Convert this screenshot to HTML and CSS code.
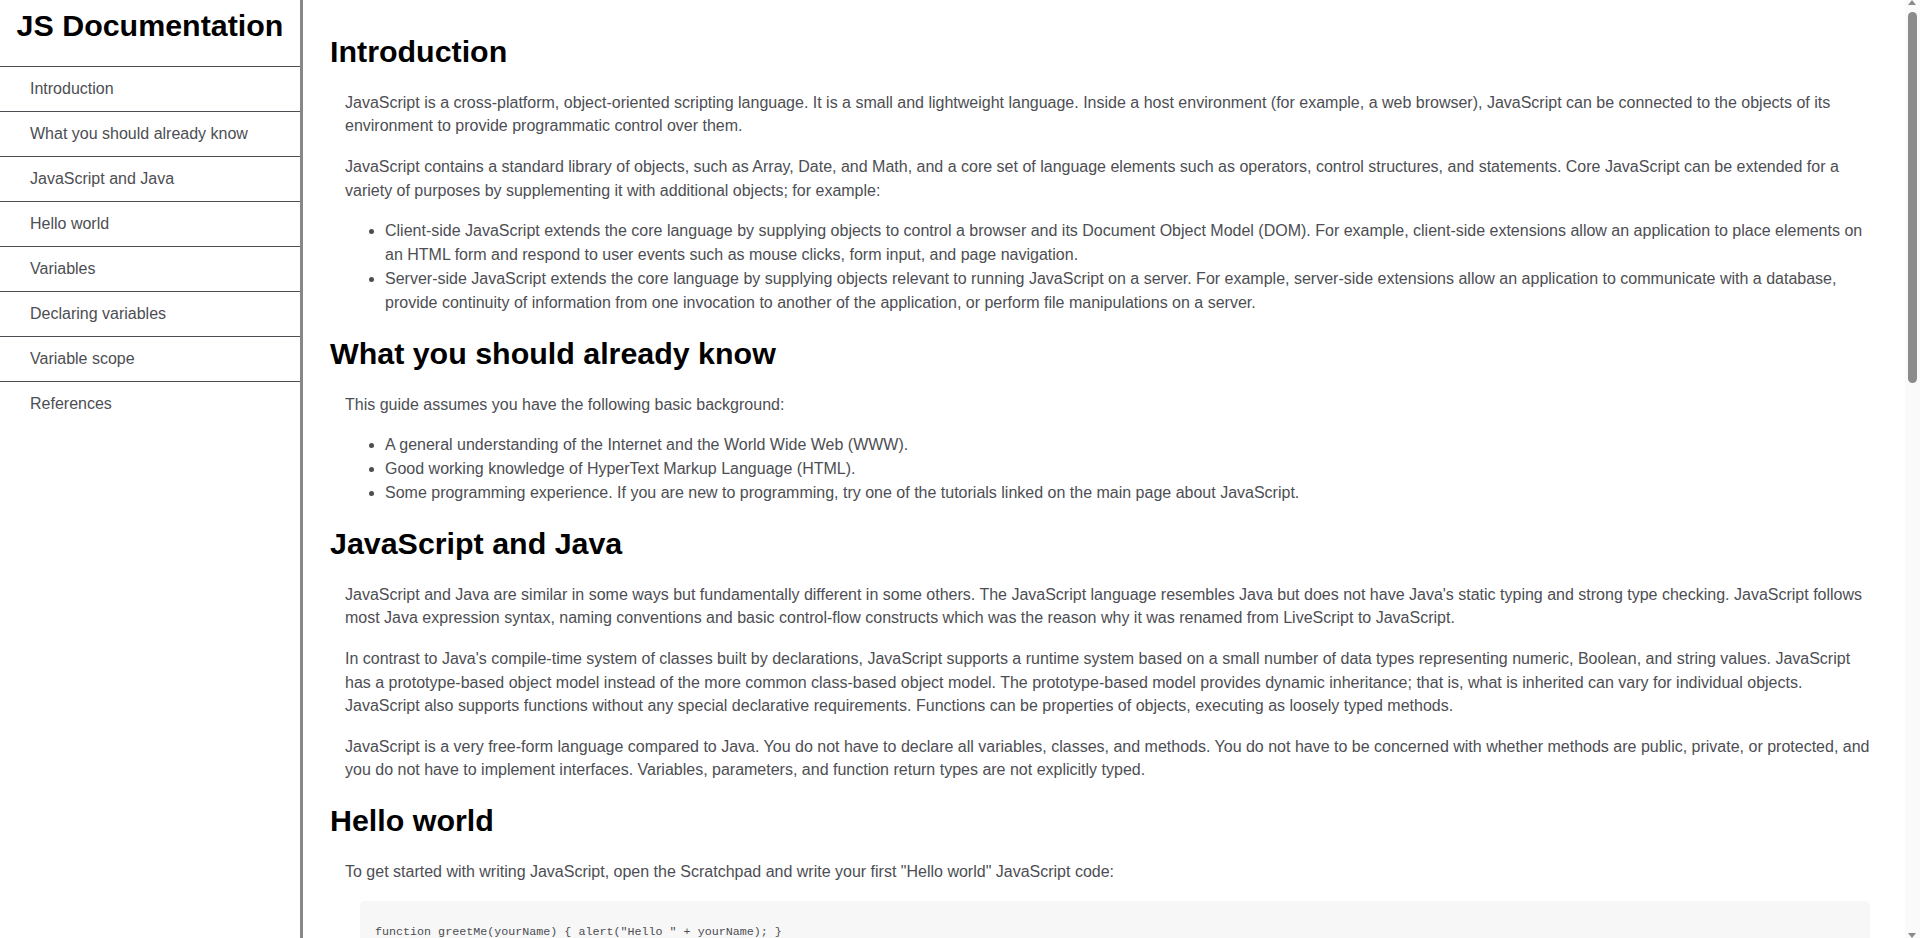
FILE: index.html
```html
<!DOCTYPE html>
<html lang="en">
<head>
<meta charset="utf-8">
<title>JS Documentation</title>
<link rel="stylesheet" href="styles.css">
</head>
<body>
<nav class="navbar" id="navbar">
  <header class="navbar-title">JS Documentation</header>
  <ul class="nav-list">
    <li class="nav-item"><a class="nav-link" href="#Introduction">Introduction</a></li>
    <li class="nav-item"><a class="nav-link" href="#What_you_should_already_know">What you should already know</a></li>
    <li class="nav-item"><a class="nav-link" href="#JavaScript_and_Java">JavaScript and Java</a></li>
    <li class="nav-item"><a class="nav-link" href="#Hello_world">Hello world</a></li>
    <li class="nav-item"><a class="nav-link" href="#Variables">Variables</a></li>
    <li class="nav-item"><a class="nav-link" href="#Declaring_variables">Declaring variables</a></li>
    <li class="nav-item"><a class="nav-link" href="#Variable_scope">Variable scope</a></li>
    <li class="nav-item"><a class="nav-link" href="#References">References</a></li>
  </ul>
</nav>
<main class="main-doc" id="main-doc">
  <section class="main-section" id="Introduction">
    <header class="section-title">Introduction</header>
    <article class="article">
      <p>JavaScript is a cross-platform, object-oriented scripting language. It is a small and lightweight language. Inside a host environment (for example, a web browser), JavaScript can be connected to the objects of its environment to provide programmatic control over them.</p>
      <p>JavaScript contains a standard library of objects, such as Array, Date, and Math, and a core set of language elements such as operators, control structures, and statements. Core JavaScript can be extended for a variety of purposes by supplementing it with additional objects; for example:</p>
      <ul class="bullets">
        <li>Client-side JavaScript extends the core language by supplying objects to control a browser and its Document Object Model (DOM). For example, client-side extensions allow an application to place elements on an HTML form and respond to user events such as mouse clicks, form input, and page navigation.</li>
        <li>Server-side JavaScript extends the core language by supplying objects relevant to running JavaScript on a server. For example, server-side extensions allow an application to communicate with a database, provide continuity of information from one invocation to another of the application, or perform file manipulations on a server.</li>
      </ul>
    </article>
  </section>
  <section class="main-section" id="What_you_should_already_know">
    <header class="section-title">What you should already know</header>
    <article class="article">
      <p>This guide assumes you have the following basic background:</p>
      <ul class="bullets">
        <li>A general understanding of the Internet and the World Wide Web (WWW).</li>
        <li>Good working knowledge of HyperText Markup Language (HTML).</li>
        <li>Some programming experience. If you are new to programming, try one of the tutorials linked on the main page about JavaScript.</li>
      </ul>
    </article>
  </section>
  <section class="main-section" id="JavaScript_and_Java">
    <header class="section-title">JavaScript and Java</header>
    <article class="article">
      <p>JavaScript and Java are similar in some ways but fundamentally different in some others. The JavaScript language resembles Java but does not have Java's static typing and strong type checking. JavaScript follows most Java expression syntax, naming conventions and basic control-flow constructs which was the reason why it was renamed from LiveScript to JavaScript.</p>
      <p>In contrast to Java's compile-time system of classes built by declarations, JavaScript supports a runtime system based on a small number of data types representing numeric, Boolean, and string values. JavaScript has a prototype-based object model instead of the more common class-based object model. The prototype-based model provides dynamic inheritance; that is, what is inherited can vary for individual objects. JavaScript also supports functions without any special declarative requirements. Functions can be properties of objects, executing as loosely typed methods.</p>
      <p>JavaScript is a very free-form language compared to Java. You do not have to declare all variables, classes, and methods. You do not have to be concerned with whether methods are public, private, or protected, and you do not have to implement interfaces. Variables, parameters, and function return types are not explicitly typed.</p>
    </article>
  </section>
  <section class="main-section" id="Hello_world">
    <header class="section-title">Hello world</header>
    <article class="article">
      <p>To get started with writing JavaScript, open the Scratchpad and write your first "Hello world" JavaScript code:</p>
      <code class="code-block">function greetMe(yourName) { alert("Hello " + yourName); }
greetMe("World");</code>
      <p>Select the code in the pad and hit Ctrl+R to watch it unfold in your browser!</p>
    </article>
  </section>
  <section class="main-section" id="Variables">
    <header class="section-title">Variables</header>
    <article class="article">
      <p>You use variables as symbolic names for values in your application. The names of variables, called identifiers, conform to certain rules.</p>
      <p>A JavaScript identifier must start with a letter, underscore (_), or dollar sign ($); subsequent characters can also be digits (0-9). Because JavaScript is case sensitive, letters include the characters "A" through "Z" (uppercase) and the characters "a" through "z" (lowercase).</p>
      <p>You can use ISO 8859-1 or Unicode letters such as å and ü in identifiers. You can also use the Unicode escape sequences as characters in identifiers. Some examples of legal names are Number_hits, temp99, and _name.</p>
    </article>
  </section>
  <section class="main-section" id="Declaring_variables">
    <header class="section-title">Declaring variables</header>
    <article class="article">
      <p>You can declare a variable in three ways:</p>
      <p>With the keyword var. For example,</p>
      <code class="code-block">var x = 42.</code>
      <p>This syntax can be used to declare both local and global variables.</p>
      <p>By simply assigning it a value. For example,</p>
      <code class="code-block">x = 42.</code>
      <p>This always declares a global variable. It generates a strict JavaScript warning. You shouldn't use this variant.</p>
      <p>With the keyword let. For example,</p>
      <code class="code-block">let y = 13.</code>
      <p>This syntax can be used to declare a block scope local variable. See Variable scope below.</p>
    </article>
  </section>
  <section class="main-section" id="Variable_scope">
    <header class="section-title">Variable scope</header>
    <article class="article">
      <p>When you declare a variable outside of any function, it is called a global variable, because it is available to any other code in the current document. When you declare a variable within a function, it is called a local variable, because it is available only within that function.</p>
      <p>JavaScript before ECMAScript 2015 does not have block statement scope; rather, a variable declared within a block is local to the function (or global scope) that the block resides within. For example the following code will log 5, because the scope of x is the function (or global context) within which x is declared, not the block, which in this case is an if statement.</p>
      <code class="code-block">if (true) { var x = 5; } console.log(x); // 5</code>
      <p>This behavior changes, when using the let declaration introduced in ECMAScript 2015.</p>
      <code class="code-block">if (true) { let y = 5; } console.log(y); // ReferenceError: y is not defined</code>
    </article>
  </section>
  <section class="main-section" id="References">
    <header class="section-title">References</header>
    <article class="article">
      <ul class="bullets">
        <li>All the documentation in this page is taken from MDN</li>
      </ul>
    </article>
  </section>
</main>
<div class="scrollbar" aria-hidden="true">
  <span class="scroll-arrow scroll-arrow-up"></span>
  <span class="scroll-thumb"></span>
  <span class="scroll-arrow scroll-arrow-down"></span>
</div>
</body>
</html>
```

FILE: styles.css
```css
* {
  box-sizing: border-box;
}

html,
body {
  margin: 0;
  padding: 0;
}

body {
  display: flex;
  align-items: flex-start;
  padding-right: 15px;
  font-family: "Liberation Sans", Arial, sans-serif;
  color: #4d4e53;
  background: #ffffff;
  line-height: 1.5;
}

/* Navigation sidebar */
.navbar {
  position: sticky;
  top: 0;
  flex: none;
  width: 303px;
  height: 100vh;
  border-right: 3px solid #888888;
}

.navbar-title {
  display: block;
  height: 66px;
  padding-top: 3px;
  font-size: 30.4px;
  line-height: 45px;
  font-weight: bold;
  color: #000000;
  text-align: center;
}

.nav-list {
  list-style: none;
  margin: 0;
  padding: 0;
}

.nav-item {
  border-top: 1px solid #4d4e53;
}

.nav-link {
  display: block;
  padding: 10px 30px;
  font-size: 16px;
  line-height: 24px;
  color: #4d4e53;
  text-decoration: none;
}

/* Main documentation */
.main-doc {
  flex: 1;
  min-width: 0;
  padding: 29px 18px 110px 27px;
}

.section-title {
  display: block;
  font-size: 30.4px;
  line-height: 45px;
  font-weight: bold;
  color: #000000;
}

.article {
  display: block;
  margin: 0 15px;
}

.article p {
  margin: 17px 0;
  font-size: 16px;
  line-height: 23.2px;
}

.article p + p {
  margin-top: 18px;
}

.bullets {
  margin: 16px 0;
  padding-left: 40px;
  font-size: 16px;
  line-height: 24px;
}

.code-block {
  display: block;
  white-space: pre-line;
  margin: 15px 2px 17px 15px;
  padding: 18px 15px 15px;
  background: #f7f7f7;
  border-radius: 5px;
  font-family: "Liberation Mono", "DejaVu Sans Mono", monospace;
  font-size: 11.7px;
  line-height: 26px;
  color: #4d4e53;
}

.article p + .code-block {
  margin-top: 15px;
}

/* Scrollbar drawn over the right edge of the window */
.scrollbar {
  position: fixed;
  top: 0;
  right: 0;
  width: 15px;
  height: 100vh;
  background: #fafafa;
}

.scroll-thumb {
  display: block;
  width: 9px;
  height: 371px;
  margin: 12px 0 0 3px;
  border-radius: 5px;
  background: #8b8b8b;
}

.scroll-arrow {
  position: absolute;
  left: 3px;
  width: 0;
  height: 0;
  border-left: 4.5px solid transparent;
  border-right: 4.5px solid transparent;
}

.scroll-arrow-up {
  top: 0;
  border-bottom: 5px solid #8b8b8b;
}

.scroll-arrow-down {
  bottom: 0;
  border-top: 5px solid #8b8b8b;
}
```
